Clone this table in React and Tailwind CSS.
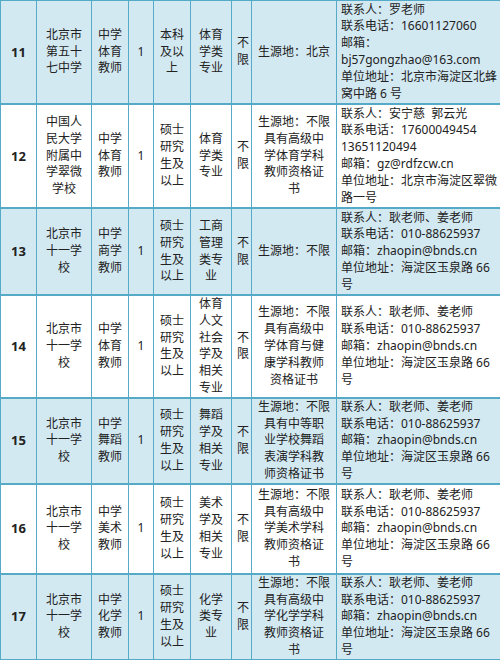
import React from "react";

const contactBnds = [
  "联系人：耿老师、姜老师",
  "联系电话：010-88625937",
  "邮箱：zhaopin@bnds.cn",
  "单位地址：海淀区玉泉路 66",
  "号",
];
const edu = ["硕士", "研究", "生及", "以上"];
const bj11 = ["北京市", "十一学", "校"];

const rows = [
  {
    n: "11",
    h: 104,
    school: ["北京市", "第五十", "七中学"],
    post: ["中学", "体育", "教师"],
    edu: ["本科", "及以", "上"],
    major: ["体育", "学类", "专业"],
    src: ["生源地：北京"],
    contact: [
      "联系人：罗老师",
      "联系电话：16601127060",
      "邮箱：",
      "bj57gongzhao@163.com",
      "单位地址：北京市海淀区北蜂",
      "窝中路 6 号",
    ],
  },
  {
    n: "12",
    h: 104,
    school: ["中国人", "民大学", "附属中", "学翠微", "学校"],
    post: ["中学", "体育", "教师"],
    edu,
    major: ["体育", "学类", "专业"],
    src: ["生源地：不限", "具有高级中", "学体育学科", "教师资格证", "书"],
    contact: [
      "联系人：安宁慈  郭云光",
      "联系电话：17600049454",
      "13651120494",
      "邮箱：gz@rdfzcw.cn",
      "单位地址：北京市海淀区翠微",
      "路一号",
    ],
  },
  {
    n: "13",
    h: 87,
    school: bj11,
    post: ["中学", "商学", "教师"],
    edu,
    major: ["工商", "管理", "类专", "业"],
    src: ["生源地：不限"],
    contact: contactBnds,
  },
  {
    n: "14",
    h: 102,
    school: bj11,
    post: ["中学", "体育", "教师"],
    edu,
    major: ["体育", "人文", "社会", "学及", "相关", "专业"],
    src: ["生源地：不限", "具有高级中", "学体育与健", "康学科教师", "资格证书"],
    contact: contactBnds,
  },
  {
    n: "15",
    h: 86,
    school: bj11,
    post: ["中学", "舞蹈", "教师"],
    edu,
    major: ["舞蹈", "学及", "相关", "专业"],
    src: ["生源地：不限", "具有中等职", "业学校舞蹈", "表演学科教", "师资格证书"],
    contact: contactBnds,
  },
  {
    n: "16",
    h: 90,
    school: bj11,
    post: ["中学", "美术", "教师"],
    edu,
    major: ["美术", "学及", "相关", "专业"],
    src: ["生源地：不限", "具有高级中", "学美术学科", "教师资格证", "书"],
    contact: contactBnds,
  },
  {
    n: "17",
    h: 85,
    school: bj11,
    post: ["中学", "化学", "教师"],
    edu,
    major: ["化学", "类专", "业"],
    src: ["生源地：不限", "具有高级中", "学化学学科", "教师资格证", "书"],
    contact: contactBnds,
  },
];

function Lines({ lines }) {
  return (
    <>
      {lines.map((l, i) => (
        <div key={i} className="whitespace-pre">
          {l}
        </div>
      ))}
    </>
  );
}

const cell = "border-x border-y-2 border-[#55aac8] align-middle p-0";

export default function App() {
  return (
    <div
      className="w-[500px] h-[660px] overflow-hidden bg-[#d3e9f2] text-[#222222] text-[12px] leading-[16.8px]"
      style={{ fontFamily: '"Noto Sans", "Noto Sans CJK SC", sans-serif' }}
    >
      <table className="table-fixed border-collapse w-[500px] -mt-[1px]">
        <colgroup>
          <col className="w-[36px]" />
          <col className="w-[55px]" />
          <col className="w-[37px]" />
          <col className="w-[25px]" />
          <col className="w-[37px]" />
          <col className="w-[41px]" />
          <col className="w-[20px]" />
          <col className="w-[85px]" />
          <col className="w-[164px]" />
        </colgroup>
        <tbody>
          {rows.map((r, i) => (
            <tr
              key={r.n}
              className={i % 2 === 0 ? "bg-[#d3e9f2]" : "bg-white"}
              style={{ height: r.h }}
            >
              <td className={`${cell} text-center font-bold text-[13px]`}>
                {r.n}
              </td>
              <td className={`${cell} text-center`}>
                <Lines lines={r.school} />
              </td>
              <td className={`${cell} text-center`}>
                <Lines lines={r.post} />
              </td>
              <td className={`${cell} text-center`}>1</td>
              <td className={`${cell} text-center`}>
                <Lines lines={r.edu} />
              </td>
              <td className={`${cell} text-center`}>
                <Lines lines={r.major} />
              </td>
              <td className={`${cell} text-center pl-[3px]`}>
                <Lines lines={["不", "限"]} />
              </td>
              <td className={`${cell} text-center`}>
                <Lines lines={r.src} />
              </td>
              <td className={`${cell} text-left pl-[4px]`}>
                <Lines lines={r.contact} />
              </td>
            </tr>
          ))}
        </tbody>
      </table>
    </div>
  );
}
